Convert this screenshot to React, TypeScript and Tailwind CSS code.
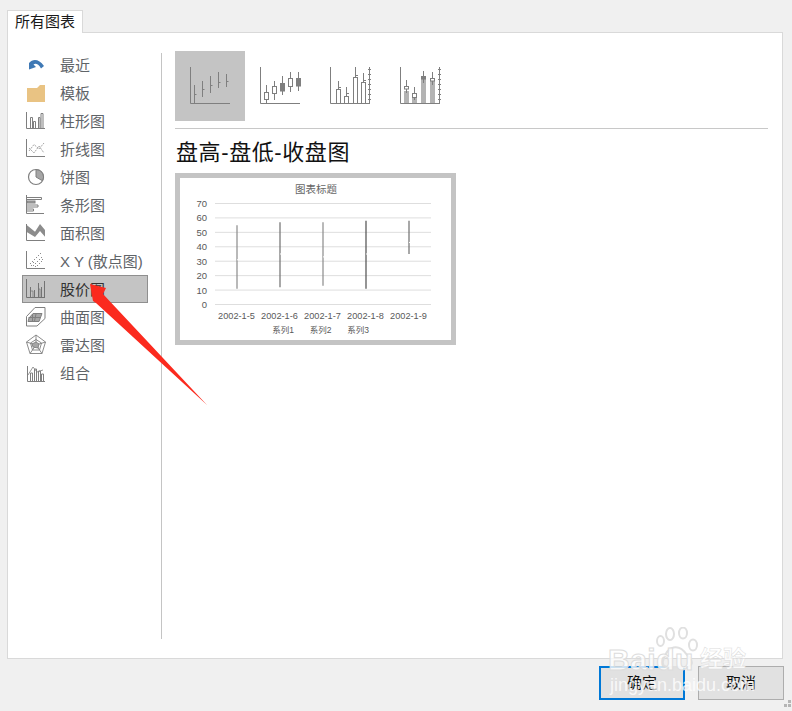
const LINE = "#7f7f7f";

function RecentIcon() {
  return (
    <svg width="22" height="22" viewBox="0 0 22 22">
      <path d="M4 9 C8 4.5 14 5 19 12 L16 14.5 C13.5 10 10.5 9 8.5 10.5 L11 13 L4 15.5 Z" fill="#3f79b5" />
    </svg>
  );
}

function FolderIcon() {
  return (
    <svg width="22" height="22" viewBox="0 0 22 22">
      <path d="M2 6 L12 6 L15 3 L20 3 L20 20 L2 20 Z" fill="#e9c383" />
    </svg>
  );
}

function BarIcon() {
  return (
    <svg width="22" height="22" viewBox="0 0 22 22" fill="none" stroke={LINE}>
      <path d="M1.5 2 V18.5 H20" />
      <path d="M5.5 18 V7.5 H7.5 V18 M8.5 18 V11.5 H10.5 V18 M13.5 18 V7.5 H15 V18 M16 18 V3.5 H18 V18" />
    </svg>
  );
}

function LineIcon() {
  return (
    <svg width="22" height="22" viewBox="0 0 22 22" fill="none">
      <path d="M1.5 1 V18.5 H20" stroke={LINE} />
      <path d="M4 13 L9 6.5 L14 11 L19 5" stroke="#a6a6a6" strokeDasharray="2 1" />
      <path d="M4 10 L9 15 L14 8 L19 15" stroke="#a6a6a6" strokeDasharray="2 1" />
    </svg>
  );
}

function PieIcon() {
  return (
    <svg width="22" height="22" viewBox="0 0 22 22">
      <circle cx="11" cy="11" r="7.5" fill="#fff" stroke={LINE} strokeWidth="1.2" />
      <path d="M11 3.5 A7.5 7.5 0 0 1 17.5 14.8 L11 11 Z" fill="#a6a6a6" stroke={LINE} />
    </svg>
  );
}

function HBarIcon() {
  return (
    <svg width="22" height="22" viewBox="0 0 22 22" fill="none" stroke={LINE}>
      <path d="M1.5 1 V19.5 H19" />
      <path d="M2 3.5 H16.5 V5.5 H2" />
      <rect x="2" y="7" width="8" height="2" fill="#a6a6a6" />
      <path d="M2 11 H13 V13 H2 M2 15 H8.5 V17 H2" />
    </svg>
  );
}

function AreaIcon() {
  return (
    <svg width="22" height="22" viewBox="0 0 22 22" fill="none">
      <path d="M1.7 3 L10 9.7 L15 2 L20 8 V14.7 L15 9 L10 15 L1.7 10 Z" fill="#8c8c8c" />
      <path d="M1.5 2 V18.5 H20" stroke={LINE} />
    </svg>
  );
}

function ScatterIcon() {
  const dots = [
    [5, 13], [7, 11], [8, 15], [9, 9], [10, 13], [11, 7], [12, 11], [12, 15],
    [13, 5], [14, 9], [14, 13], [15, 3], [16, 7], [16, 11], [17, 9], [6, 15], [10, 16], [8, 12],
  ];
  return (
    <svg width="22" height="22" viewBox="0 0 22 22" fill="none">
      <path d="M1.5 1 V18.5 H20" stroke={LINE} />
      {dots.map(([x, y]) => (
        <rect key={`${x}-${y}`} x={x} y={y} width="1" height="1" fill="#8c8c8c" />
      ))}
    </svg>
  );
}

function StockIcon() {
  return (
    <svg width="22" height="22" viewBox="0 0 22 22" fill="none" stroke="#737373">
      <path d="M1.5 1 V19.5 H20" />
      <path d="M5.5 9 V19 M9.5 12 V19 M13.5 5 V19 M16.5 9 V19 M19.5 3 V19" />
      <path d="M6 13 H8 V19 M14 11 H15 V19" strokeWidth="0.7" />
    </svg>
  );
}

function SurfaceIcon() {
  return (
    <svg width="22" height="22" viewBox="0 0 22 22" fill="none" stroke={LINE}>
      <path d="M1.5 10.5 L10 1.5 H20 V12.5 L12 20 H1.5 Z" />
      <path d="M4 12 L8 7.5 H17 L14 15.5 H3 Z" fill="#a6a6a6" />
      <path d="M7.5 8 V15 M11 8 L9.5 15 M3.5 11.5 H15.5" />
    </svg>
  );
}

function RadarIcon() {
  return (
    <svg width="22" height="22" viewBox="0 0 22 22" fill="none" stroke={LINE} strokeWidth="0.9">
      <path d="M11 1 L20.5 8 L17 19.5 H5 L1.5 8 Z" />
      <path d="M11 5.5 L16.5 9 L14.5 16 H7.5 L5.5 9 Z" />
      <path d="M11 1 V11 M20.5 8 L11 11 M17 19.5 L11 11 M5 19.5 L11 11 M1.5 8 L11 11" />
      <path d="M11 8 L14 10 L13 14 L8 13 L7 10 Z" fill="#a6a6a6" />
    </svg>
  );
}

function ComboIcon() {
  return (
    <svg width="22" height="22" viewBox="0 0 22 22" fill="none" stroke={LINE}>
      <path d="M2.5 4 V19.5 H20" />
      <path d="M5.5 19 V11 H7.5 V19 M9.5 19 V7 H11.5 V19 M13.5 19 V9 H15.5 V19 M16.5 19 V12 H18.5 V19" />
      <path d="M3 13 L8 5 L12 10 L18 8" strokeWidth="0.8" />
    </svg>
  );
}

const categories = [
  { label: "最近", icon: <RecentIcon /> },
  { label: "模板", icon: <FolderIcon /> },
  { label: "柱形图", icon: <BarIcon /> },
  { label: "折线图", icon: <LineIcon /> },
  { label: "饼图", icon: <PieIcon /> },
  { label: "条形图", icon: <HBarIcon /> },
  { label: "面积图", icon: <AreaIcon /> },
  { label: "X Y (散点图)", icon: <ScatterIcon /> },
  { label: "股价图", icon: <StockIcon />, selected: true },
  { label: "曲面图", icon: <SurfaceIcon /> },
  { label: "雷达图", icon: <RadarIcon /> },
  { label: "组合", icon: <ComboIcon /> },
];

function Axis() {
  return <path d="M15.5 16 V52.5 H55" fill="none" stroke={LINE} />;
}

function RightTicks() {
  return (
    <path
      d="M54.5 16 V53 M53 18.5 H56 M53 23.5 H56 M53 28.5 H56 M53 33.5 H56 M53 38.5 H56 M53 43.5 H56 M53 48.5 H56"
      fill="none"
      stroke={LINE}
    />
  );
}

function HighLowClose() {
  return (
    <svg width="70" height="70" viewBox="0 0 70 70" fill="none" stroke={LINE}>
      <Axis />
      <path d="M19.5 34 V52 M27.5 30 V46 M35.5 25 V42 M43.5 21 V37 M51.5 23 V36" />
      <path d="M20 43.5 H21.5 M28 38.5 H29.5 M36 34.5 H37.5 M44 31.5 H45.5 M52 30.5 H53.5" />
    </svg>
  );
}

function OpenHighLowClose() {
  return (
    <svg width="70" height="70" viewBox="0 0 70 70" fill="none" stroke={LINE}>
      <Axis />
      <path d="M21.5 34 V52 M29.5 30 V49 M37.5 25 V44 M45.5 21 V41 M53.5 21 V40" />
      <rect x="19.5" y="41.5" width="4" height="7" fill="#fff" />
      <rect x="27.5" y="35.5" width="4" height="7" fill="#fff" />
      <rect x="35.5" y="32.5" width="4" height="7.5" fill={LINE} />
      <rect x="43.5" y="27.5" width="4" height="8" fill="#fff" />
      <rect x="51.5" y="27.5" width="4" height="7.5" fill={LINE} />
    </svg>
  );
}

function VolumeHighLowClose() {
  return (
    <svg width="70" height="70" viewBox="0 0 70 70" fill="none" stroke={LINE}>
      <Axis />
      <RightTicks />
      <path d="M23.5 30 V38 M31.5 36 V45 M40.5 16 V26 M48.5 22 V31" />
      <path d="M24 36.5 H26 M32 42.5 H34 M41 24.5 H43 M49 29.5 H51" />
      <rect x="21.5" y="38.5" width="4" height="14" />
      <rect x="29.5" y="45.5" width="4" height="7" />
      <rect x="38.5" y="26.5" width="4" height="26" />
      <rect x="46.5" y="31.5" width="4" height="21" />
    </svg>
  );
}

function VolumeOpenHighLowClose() {
  return (
    <svg width="70" height="70" viewBox="0 0 70 70" fill="none" stroke={LINE}>
      <rect x="19" y="40" width="5" height="13" fill="#b3b3b3" stroke="none" />
      <rect x="27" y="46" width="5" height="7" fill="#b3b3b3" stroke="none" />
      <rect x="36" y="26" width="5" height="27" fill="#b3b3b3" stroke="none" />
      <rect x="45" y="29" width="5" height="24" fill="#b3b3b3" stroke="none" />
      <Axis />
      <RightTicks />
      <path d="M21.5 29 V42 M29.5 36 V49 M38.5 20 V32 M47.5 21 V34" />
      <rect x="19.5" y="35.5" width="4" height="2.5" fill="#fff" />
      <rect x="27.5" y="42.5" width="4" height="4" fill="#fff" />
      <rect x="36.5" y="25.5" width="4" height="2.5" fill={LINE} />
      <rect x="45.5" y="27.5" width="4" height="2.5" fill="#fff" />
    </svg>
  );
}

const dates = ["2002-1-5", "2002-1-6", "2002-1-7", "2002-1-8", "2002-1-9"];
const stems = [
  { x: 57, top: 55, low: 11, close: 31, color: "#8a8a8a" },
  { x: 100, top: 57, low: 12, close: 35, color: "#6e6e6e" },
  { x: 143, top: 57, low: 13, close: 33, color: "#8a8a8a" },
  { x: 186, top: 58, low: 11, close: 35, color: "#4d4d4d" },
  { x: 229, top: 58, low: 35, close: 43, color: "#6e6e6e" },
];

function StockPreview() {
  const yOf = (v: number) => 126.5 - v * 1.443;
  return (
    <svg width="271" height="162" viewBox="0 0 271 162" fontFamily="'Liberation Sans', 'Noto Sans CJK SC', sans-serif">
      <text x="136" y="15" textAnchor="middle" fontSize="10.5" fill="#666">图表标题</text>
      {[0, 10, 20, 30, 40, 50, 60, 70].map((v) => (
        <g key={v}>
          <line x1="35" x2="251" y1={yOf(v)} y2={yOf(v)} stroke="#dedede" />
          <text x="27" y={yOf(v) + 3.5} textAnchor="end" fontSize="9.5" fill="#595959">{v}</text>
        </g>
      ))}
      {stems.map((s) => (
        <g key={s.x}>
          <line x1={s.x} x2={s.x} y1={yOf(s.top)} y2={yOf(s.low)} stroke={s.color} strokeWidth="1.2" />
          <line x1={s.x} x2={s.x + 1.5} y1={yOf(s.close)} y2={yOf(s.close)} stroke="#fff" />
        </g>
      ))}
      {dates.map((d, i) => (
        <text key={d} x={56.5 + i * 43} y="141" textAnchor="middle" fontSize="9.2" fill="#595959">{d}</text>
      ))}
      {["系列1", "系列2", "系列3"].map((s, i) => (
        <text key={s} x={103 + i * 37.5} y="155" textAnchor="middle" fontSize="8.5" fill="#595959">{s}</text>
      ))}
    </svg>
  );
}

function Watermark() {
  return (
    <div className="pointer-events-none absolute left-[605px] top-[624px] h-[76px] w-[150px] text-[#ffffffcc]">
      <svg className="absolute left-[50px] top-[3px]" width="44" height="42" viewBox="0 0 44 42" fill="none" stroke="#e0e0e0" strokeWidth="2">
        <ellipse cx="5.5" cy="14" rx="3.5" ry="5" />
        <ellipse cx="15" cy="7" rx="4" ry="6" />
        <ellipse cx="28" cy="6" rx="4" ry="5.5" />
        <ellipse cx="38" cy="18" rx="4" ry="5.5" />
        <path d="M8 34 C12 18 24 16 32 28 C41 36 36 41 28 40 H14 C9 40 7 38 8 34 Z" />
      </svg>
      <div className="absolute left-[3px] top-[21px] font-['Liberation_Sans',sans-serif] text-[30px] font-bold leading-none tracking-[0.5px] [-webkit-text-stroke:1px_#dcdcdc]">
        Baidu
      </div>
      <div className="absolute left-[95px] top-[22px] font-['Noto_Sans_CJK_SC',sans-serif] text-[23px] font-bold leading-none text-[#ffffffdd] [-webkit-text-stroke:0.5px_#dcdcdc]">
        经验
      </div>
      <div className="absolute left-[5px] top-[52px] font-['Liberation_Sans',sans-serif] text-[18px] leading-none whitespace-nowrap">
        jingyan.baidu.com
      </div>
    </div>
  );
}

export default function App() {
  return (
    <div className="relative flex h-[711px] w-[792px] flex-col overflow-hidden bg-[#f0f0f0] pl-[7px] pt-[10px] font-['Liberation_Sans','Noto_Sans_CJK_SC',sans-serif]">
      <div className="relative z-10 -mb-px flex h-[23px] w-[76px] items-center justify-center border border-b-0 border-[#d9d9d9] bg-white text-[15px] text-[#1a1a1a]">
        所有图表
      </div>

      <div className="flex h-[627px] w-[776px] items-start border border-[#d9d9d9] bg-white pt-[18px]">
        <div className="ml-[14px] flex w-[126px] flex-col">
          {categories.map((c) => (
            <div
              key={c.label}
              className={
                c.selected
                  ? "flex h-[28px] items-center border border-[#8f8f8f] bg-[#c4c4c4] pl-[2px] text-[15px] text-[#333333]"
                  : "flex h-[28px] items-center border border-transparent pl-[2px] text-[15px] text-[#5f6468]"
              }
            >
              <span className="flex w-[35px] shrink-0">{c.icon}</span>
              <span className="whitespace-nowrap pt-[2px]">{c.label}</span>
            </div>
          ))}
        </div>

        <div className="ml-[13px] mt-[2px] h-[586px] w-px bg-[#c4c4c4]" />

        <div className="ml-[13px] flex w-[593px] flex-col">
          <div className="flex">
            <div className="bg-[#c4c4c4]"><HighLowClose /></div>
            <OpenHighLowClose />
            <VolumeHighLowClose />
            <VolumeOpenHighLowClose />
          </div>
          <div className="mt-[7px] h-px bg-[#c8c8c8]" />
          <h2 className="mt-[10px] h-[34px] pl-px text-[22px] leading-[28px] tracking-[0.6px] text-[#111111]">盘高-盘低-收盘图</h2>
          <div className="h-[172px] w-[281px] border-[5px] border-[#c4c4c4]">
            <StockPreview />
          </div>
        </div>
      </div>

      <div className="flex justify-end gap-[13px] pr-[8px] pt-[7px]">
        <button className="h-[34px] w-[86px] border-2 border-[#0078d7] bg-[#e1e1e1] text-[15px] text-[#111111]">确定</button>
        <button className="h-[34px] w-[86px] border border-[#adadad] bg-[#e1e1e1] text-[15px] text-[#111111]">取消</button>
      </div>

      <svg className="absolute left-[781px] top-[699px]" width="11" height="11" viewBox="0 0 11 11" fill="#b5b5b5">
        <rect x="7" y="1" width="3" height="3" />
        <rect x="3" y="5" width="3" height="3" />
        <rect x="7" y="5" width="3" height="3" />
      </svg>

      <Watermark />

      {/* red arrow drawn over the list */}
      <svg className="pointer-events-none absolute left-0 top-0" width="792" height="711" viewBox="0 0 792 711">
        <polygon points="90,284 106,288 103,294 207,405 96,303 93,301" fill="#fb2a1e" />
      </svg>
    </div>
  );
}
